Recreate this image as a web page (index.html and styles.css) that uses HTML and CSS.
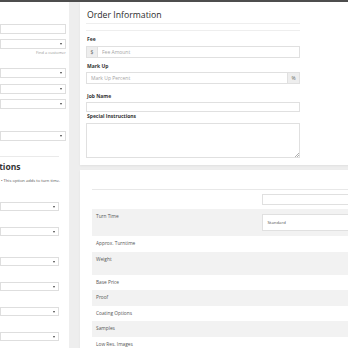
FILE: index.html
```html
<!DOCTYPE html>
<html>
<head>
    <meta charset="utf-8">
    <meta name="viewport" content="width=device-width, initial-scale=1">
    <title>New Order</title>
    <link rel="stylesheet" href="styles.css">
</head>

<body>
    <div class="page">
        <!-- Customer / options column, scrolled off to the left -->
        <aside class="side">
            <input type="text" class="field">
            <div class="field select gap-s"></div>
            <p class="hint">Find a customer</p>
            <div class="field select gap-l"></div>
            <div class="field select gap-s"></div>
            <div class="field select gap-s"></div>
            <div class="field select gap-xl"></div>

            <div class="options">
                <hr class="side-rule">
                <h3 class="side-title">Options</h3>
                <p class="note">&bull; This option adds to turn time.</p>
                <div class="field select small first"></div>
                <div class="field select small gap-m"></div>
                <div class="field select small gap-w"></div>
                <div class="field select small gap-m"></div>
                <div class="field select small gap-m"></div>
                <div class="field select small gap-m"></div>
            </div>
        </aside>

        <main class="main">
            <section class="card order">
                <div class="order-form">
                    <h2 class="card-title">Order Information</h2>
                    <hr class="rule">

                    <div class="form-group">
                        <label for="fee">Fee</label>
                        <div class="input-group">
                            <span class="addon">$</span>
                            <input type="text" id="fee" placeholder="Fee Amount">
                        </div>
                    </div>

                    <div class="form-group">
                        <label for="markup">Mark Up</label>
                        <div class="input-group">
                            <input type="text" id="markup" placeholder="Mark Up Percent">
                            <span class="addon addon-right">%</span>
                        </div>
                    </div>

                    <div class="form-group loose">
                        <label for="jobName">Job Name</label>
                        <input type="text" id="jobName" class="job-input">
                    </div>

                    <div class="form-group tight">
                        <label for="instructions">Special Instructions</label>
                        <div class="textarea-wrap">
                            <textarea id="instructions"></textarea>
                        </div>
                    </div>
                </div>
            </section>

            <section class="card details">
                <div class="spec-table">
                    <div class="spec-row first-row">
                        <div class="spec-label"></div>
                        <div class="spec-value"><input type="text" class="spec-input"></div>
                    </div>
                    <div class="spec-row striped">
                        <div class="spec-label">Turn Time</div>
                        <div class="spec-value"><div class="spec-select">Standard</div></div>
                    </div>
                    <div class="spec-row">
                        <div class="spec-label">Approx. Turntime</div>
                        <div class="spec-value"></div>
                    </div>
                    <div class="spec-row striped tall">
                        <div class="spec-label">Weight</div>
                        <div class="spec-value"></div>
                    </div>
                    <div class="spec-row">
                        <div class="spec-label">Base Price</div>
                        <div class="spec-value"></div>
                    </div>
                    <div class="spec-row striped">
                        <div class="spec-label">Proof</div>
                        <div class="spec-value"></div>
                    </div>
                    <div class="spec-row">
                        <div class="spec-label">Coating Options</div>
                        <div class="spec-value"></div>
                    </div>
                    <div class="spec-row striped">
                        <div class="spec-label">Samples</div>
                        <div class="spec-value"></div>
                    </div>
                    <div class="spec-row">
                        <div class="spec-label">Low Res. Images</div>
                        <div class="spec-value"></div>
                    </div>
                </div>
            </section>
        </main>
    </div>
</body>
</html>
```

FILE: styles.css
```css
/* Order entry page, compact layout */
html, body {
    margin: 0;
    padding: 0;
    overflow: hidden;
}
body {
    font-family: "Open Sans", Arial, sans-serif;
    background-color: #eeeeee;
    border-top: 2px solid #4d4d4d;
    color: #333;
}
.page {
    display: flex;
    gap: 11px;
    min-height: 346px;
}

/* Left column */
.side {
    flex: none;
    width: 69px;
    box-sizing: border-box;
    padding: 22px 3px 0 0;
    background-color: #fff;
    overflow: hidden;
}
.field {
    display: block;
    box-sizing: border-box;
    width: 100%;
    height: 9.5px;
    margin: 0;
    padding: 0;
    border: 1px solid #dedede;
    background-color: #fff;
}
.select {
    position: relative;
    height: 10px;
}
.select::after {
    content: "";
    position: absolute;
    right: 3px;
    top: 50%;
    margin-top: -1px;
    border-left: 1.5px solid transparent;
    border-right: 1.5px solid transparent;
    border-top: 2px solid #444;
}
.gap-s { margin-top: 5.5px; }
.gap-l { margin-top: 13.8px; }
.gap-xl { margin-top: 22px; }
.hint {
    margin: 0.7px 0 0;
    font-size: 4px;
    line-height: 5px;
    color: #999;
    text-align: right;
}
.options {
    padding-right: 7px;
}
.side-rule {
    margin: 15px 0 0;
    border: 0;
    border-top: 1px solid #eaeaea;
}
.side-title {
    margin: 5px 0 0 -13px;
    font-size: 8.5px;
    line-height: 10px;
    font-weight: 700;
    white-space: nowrap;
}
.note {
    margin: 5.5px 0 0 1px;
    font-size: 4.1px;
    line-height: 5px;
    color: #555;
    white-space: nowrap;
}
.small { height: 9px; }
.first { margin-top: 19.5px; }
.gap-m { margin-top: 16px; }
.gap-w { margin-top: 21px; }

/* Right column */
.main {
    flex: none;
    width: 330px;
}
.card {
    background-color: #fff;
    box-shadow: 0 1px 2px rgba(0, 0, 0, 0.06);
}
.order {
    padding: 7px 0 7px 6px;
}
.order-form {
    width: 214px;
}
.card-title {
    margin: 0;
    padding: 0 1px 2px;
    font-size: 8.7px;
    line-height: 12px;
    font-weight: 400;
    color: #2b2b2b;
    border-bottom: 1px solid #eeeeee;
}
.rule {
    margin: 6px 0 0;
    border: 0;
    border-top: 1px solid #eeeeee;
}
.form-group {
    margin-top: 5px;
}
.form-group.loose { margin-top: 8.5px; }
.form-group.tight { margin-top: 1px; }
.form-group label {
    display: block;
    margin-bottom: 3.5px;
    padding-left: 1px;
    font-size: 5px;
    line-height: 6px;
    font-weight: 700;
}
.form-group input,
.form-group textarea {
    display: block;
    box-sizing: border-box;
    width: 100%;
    margin: 0;
    padding: 0 4px;
    border: 1px solid #e0e0e0;
    font-family: "Open Sans", Arial, sans-serif;
    font-size: 5px;
    color: #555;
    background-color: #fff;
}
.form-group input::placeholder {
    color: #a5a5a5;
}
.input-group {
    display: flex;
    height: 12px;
}
.input-group input {
    flex: 1;
    height: 12px;
}
.addon {
    flex: none;
    width: 11px;
    box-sizing: border-box;
    border: 1px solid #e0e0e0;
    border-right: 0;
    background-color: #eeeeee;
    font-size: 5px;
    line-height: 10px;
    text-align: center;
    color: #666;
}
.addon-right {
    width: 12px;
    border-right: 1px solid #e0e0e0;
    border-left: 0;
}
.job-input {
    height: 10px;
}
.textarea-wrap {
    position: relative;
}
.form-group textarea {
    height: 35.5px;
    padding: 3px 4px;
    resize: none;
}
/* small resize grip in the corner */
.textarea-wrap::after {
    content: "";
    position: absolute;
    right: 1px;
    bottom: 1px;
    width: 4px;
    height: 4px;
    background: linear-gradient(135deg, transparent 48%, #b0b0b0 48%, #b0b0b0 58%, transparent 58%, transparent 72%, #b0b0b0 72%, #b0b0b0 84%, transparent 84%);
}

/* Specification table */
.details {
    margin-top: 5px;
    padding: 19px 0 0 12px;
    min-height: 180px;
}
.spec-table {
    border-top: 1px solid #e8e8e8;
}
.spec-row {
    display: flex;
}
.spec-row.striped {
    background-color: #f2f2f2;
}
.spec-row.tall {
    min-height: 23px;
}
.spec-label {
    flex: none;
    width: 170px;
    box-sizing: border-box;
    padding: 5px 4px;
    font-size: 4.8px;
    line-height: 5.5px;
    color: #555;
}
.spec-value {
    flex: 1;
    padding: 5px 0;
}
.first-row .spec-value {
    padding: 3.5px 0 4px;
}
.spec-input {
    display: block;
    box-sizing: border-box;
    width: 100%;
    height: 11.5px;
    margin: 0;
    border: 1px solid #e0e0e0;
}
.spec-select {
    box-sizing: border-box;
    height: 17px;
    padding: 0 4.5px;
    border: 1px solid #e0e0e0;
    background-color: #fff;
    font-size: 4.3px;
    line-height: 15px;
    color: #555;
}
```
